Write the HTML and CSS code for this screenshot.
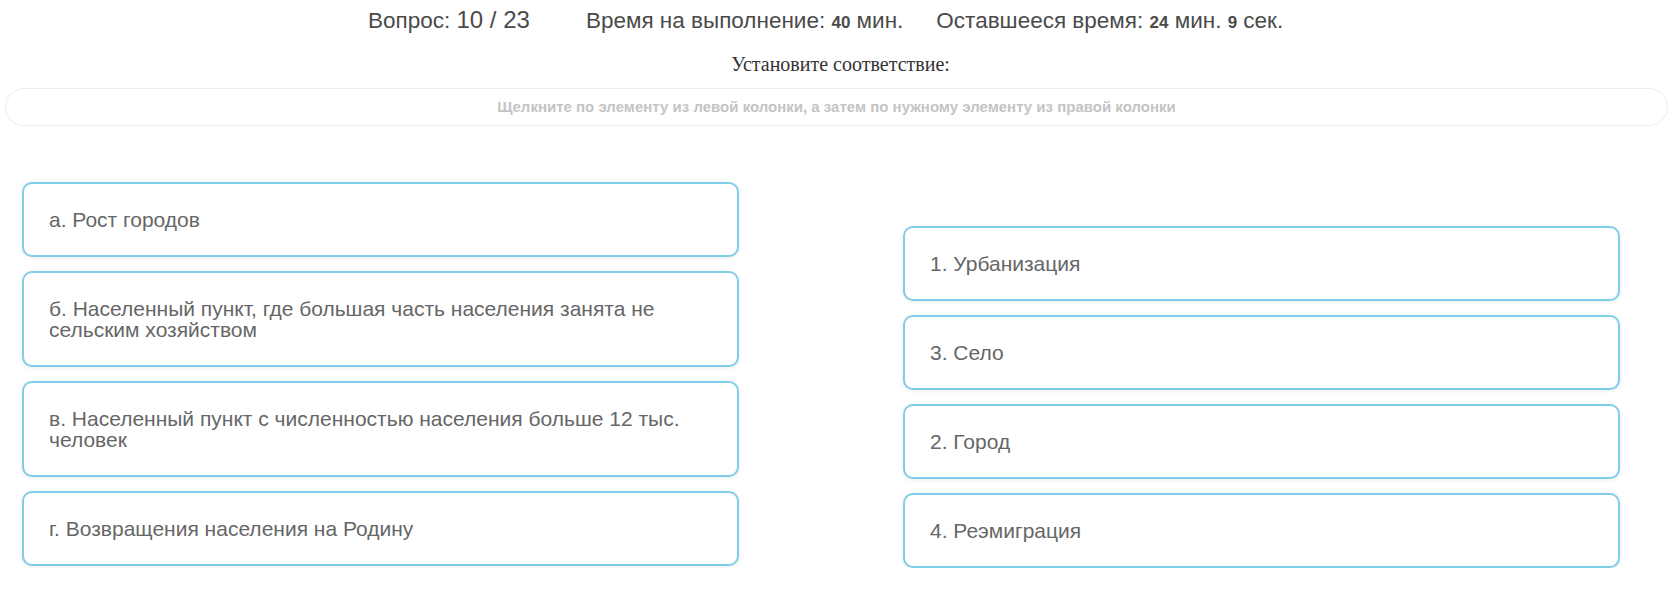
FILE: index.html
```html
<!DOCTYPE html>
<html lang="ru">
<head>
<meta charset="utf-8">
<title>Тест</title>
<link rel="stylesheet" href="styles.css">
</head>
<body>
<div class="header">
  <span class="stat stat-q">Вопрос: <span class="num">10 / 23</span></span>
  <span class="stat stat-t">Время на выполнение: <b>40</b> мин.</span>
  <span class="stat">Оставшееся время: <b>24</b> мин. <b>9</b> сек.</span>
</div>
<div class="task">Установите соответствие:</div>
<div class="hint">Щелкните по элементу из левой колонки, а затем по нужному элементу из правой колонки</div>
<div class="columns">
  <div class="col col-left">
    <div class="item">а. Рост городов</div>
    <div class="item">б. Населенный пункт, где большая часть населения занята не сельским хозяйством</div>
    <div class="item">в. Населенный пункт с численностью населения больше 12 тыс. человек</div>
    <div class="item">г. Возвращения населения на Родину</div>
  </div>
  <div class="col col-right">
    <div class="item">1. Урбанизация</div>
    <div class="item">3. Село</div>
    <div class="item">2. Город</div>
    <div class="item">4. Реэмиграция</div>
  </div>
</div>
</body>
</html>
```
FILE: styles.css
```css
html, body {
  margin: 0;
  padding: 0;
  background: #fff;
}
body {
  font-family: "Liberation Sans", Arial, sans-serif;
}
.header {
  display: flex;
  justify-content: flex-start;
  align-items: baseline;
  padding-top: 6px;
  padding-left: 368px;
  height: 36px;
  box-sizing: border-box;
  color: #4a4a4a;
  font-size: 22.5px;
  line-height: 28px;
}
.num {
  font-size: 24px;
}
.stat b {
  font-size: 17px;
  font-weight: bold;
}
.stat-q {
  margin-right: 56px;
}
.stat-t {
  margin-right: 33px;
}
.task {
  font-family: "Liberation Serif", "Times New Roman", serif;
  font-size: 20px;
  color: #333;
  text-align: center;
  line-height: 22px;
  margin-top: 17px;
  padding-left: 12px;
}
.hint {
  margin: 13px 1px 0 5px;
  height: 38px;
  box-sizing: border-box;
  border: 1px solid #ececec;
  border-radius: 19px;
  color: #c4c4c4;
  font-weight: bold;
  font-size: 15px;
  line-height: 36px;
  text-align: center;
}
.columns {
  display: flex;
  align-items: flex-start;
  gap: 164px;
  padding-left: 22px;
  margin-top: 56px;
}
.col {
  width: 717px;
  display: flex;
  flex-direction: column;
  gap: 14px;
}
.col-right {
  margin-top: 44px;
}
.item {
  border: 2px solid #80cdea;
  border-radius: 10px;
  padding: 25px 25px;
  color: #666;
  font-size: 21px;
  line-height: 21px;
  box-shadow: 0 1px 4px rgba(0, 0, 0, 0.08);
  background: #fff;
}
```
